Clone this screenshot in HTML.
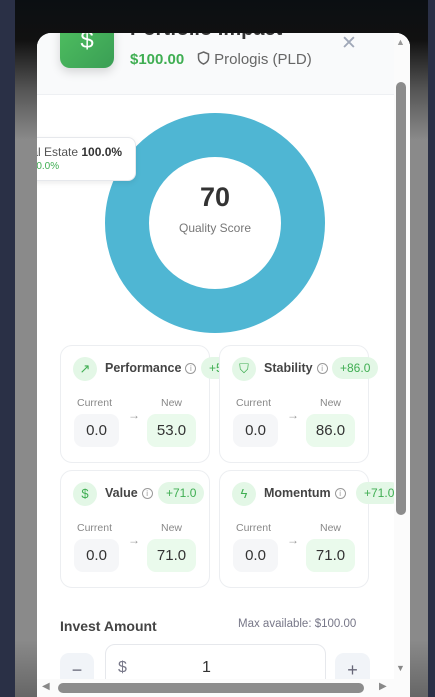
<!DOCTYPE html>
<html><head><style>
*{box-sizing:border-box;margin:0;padding:0}
body{width:435px;height:697px;overflow:hidden;background:#2a3046;font-family:"Liberation Sans",sans-serif;position:relative}
.bgg{position:absolute;left:15px;top:0;width:413px;height:697px;background:linear-gradient(#0b0f12 0,#111 40px,#555 90px,#8a8a8a 140px,#8a8a8a 640px,#666 697px)}
.modal{position:absolute;left:37px;top:33px;width:373px;height:664px;background:#fff;border-radius:14px 14px 0 0;overflow:hidden}
.hdr{position:absolute;left:0;top:0;width:373px;height:62px;background:#f9fafb;border-bottom:1px solid #eef0f3}
.icon{position:absolute;left:23px;top:-12px;width:54px;height:47px;border-radius:10px;background:linear-gradient(135deg,#4fc060,#3a9e55);color:#fff;font-size:24px;text-align:center;line-height:40px;box-shadow:0 4px 10px rgba(0,0,0,.15)}
.title{position:absolute;left:93px;top:-15px;font-size:20px;font-weight:bold;color:#333}
.amt{position:absolute;left:93px;top:18px;font-size:15px;color:#3fae52;font-weight:bold}
.pld{position:absolute;left:160px;top:18px;font-size:15px;color:#666}
.x{position:absolute;left:304px;top:-1px;font-size:19px;color:#a0a8b8}
.tip{position:absolute;left:-10px;top:104px;width:109px;height:44px;background:#fff;border:1px solid #e6e8ec;border-radius:8px;box-shadow:0 2px 6px rgba(0,0,0,.08);font-size:12px;color:#555;padding:7px 0 0 0}
.card{position:absolute;width:150px;height:118px;border:1px solid #eceef1;border-radius:12px;background:#fff}
.ci{position:absolute;left:12px;top:11px;width:24px;height:24px;border-radius:50%;background:#e3f7e6;color:#3fae52;font-size:13px;text-align:center;line-height:24px}
.cn{position:absolute;left:44px;top:15px;font-size:12.5px;font-weight:bold;color:#444;white-space:nowrap}
.info{display:inline-block;width:11px;height:11px;border:1px solid #999;border-radius:50%;font-size:8px;line-height:9px;text-align:center;color:#999;font-weight:normal;vertical-align:1px;margin-left:4px}
.badge{position:absolute;top:11px;height:22px;border-radius:11px;background:#e3f7e6;color:#3fae52;font-size:12px;line-height:22px;padding:0 8px;white-space:nowrap}
.lb{position:absolute;top:51px;font-size:10.5px;color:#888}
.bx{position:absolute;top:68px;height:33px;border-radius:9px;font-size:15px;color:#333;text-align:center;line-height:33px}
.cur{left:13px;width:45px;background:#f5f6f8}
.new{left:86px;width:49px;background:#eafaec}
.arr{position:absolute;left:67px;top:62px;color:#999;font-size:12px}
</style></head><body>
<div class="bgg"></div>
<div class="modal">
 <div class="hdr">
  <div class="icon">$</div>
  <div class="title">Portfolio Impact</div>
  <div class="amt">$100.00</div>
  <div class="pld"><svg width="13" height="14" viewBox="0 0 13 14" style="vertical-align:-1px"><path d="M6.5 1L11.5 3V7C11.5 10 9 12 6.5 13C4 12 1.5 10 1.5 7V3Z" fill="none" stroke="#666" stroke-width="1.5"/></svg> Prologis (PLD)</div>
  <div class="x">✕</div>
 </div>
 <svg style="position:absolute;left:67px;top:79px" width="222" height="222"><circle cx="111" cy="111" r="88" fill="none" stroke="#4fb6d3" stroke-width="44"/></svg>
 <div style="position:absolute;left:128px;top:149px;width:100px;text-align:center;font-size:27px;font-weight:bold;color:#333">70</div>
 <div style="position:absolute;left:128px;top:188px;width:100px;text-align:center;font-size:12px;color:#777">Quality Score</div>
 <div class="tip"><div>&nbsp;al Estate <b style="color:#333">100.0%</b></div><div style="color:#3fae52;font-size:10px;margin-top:2px">&nbsp;00.0%</div></div>

 <div class="card" style="left:23px;top:312px"><div class="ci">↗</div><div class="cn">Performance<span class="info">i</span></div><div class="badge" style="left:140px">+53.0</div><div class="lb" style="left:16px">Current</div><div class="lb" style="left:100px">New</div><div class="bx cur">0.0</div><div class="arr">→</div><div class="bx new">53.0</div></div>
 <div class="card" style="left:182px;top:312px"><div class="ci">⛉</div><div class="cn">Stability<span class="info">i</span></div><div class="badge" style="left:112px">+86.0</div><div class="lb" style="left:16px">Current</div><div class="lb" style="left:100px">New</div><div class="bx cur">0.0</div><div class="arr">→</div><div class="bx new">86.0</div></div>
 <div class="card" style="left:23px;top:437px"><div class="ci">$</div><div class="cn">Value<span class="info">i</span></div><div class="badge" style="left:97px">+71.0</div><div class="lb" style="left:16px">Current</div><div class="lb" style="left:100px">New</div><div class="bx cur">0.0</div><div class="arr">→</div><div class="bx new">71.0</div></div>
 <div class="card" style="left:182px;top:437px"><div class="ci">ϟ</div><div class="cn">Momentum<span class="info">i</span></div><div class="badge" style="left:136px">+71.0</div><div class="lb" style="left:16px">Current</div><div class="lb" style="left:100px">New</div><div class="bx cur">0.0</div><div class="arr">→</div><div class="bx new">71.0</div></div>

 <div style="position:absolute;left:23px;top:585px;font-size:14px;font-weight:bold;color:#444">Invest Amount</div>
 <div style="position:absolute;left:201px;top:585px;font-size:11.5px;color:#778">Max available: $100.00</div>
 <div style="position:absolute;left:23px;top:620px;width:34px;height:40px;border-radius:9px;background:#f1f4f8;text-align:center;line-height:34px;color:#667;font-size:18px">−</div>
 <div style="position:absolute;left:68px;top:611px;width:221px;height:60px;border-radius:10px;border:1px solid #e6e8ec"><span style="position:absolute;left:12px;top:14px;font-size:16px;color:#778">$</span><span style="position:absolute;left:96px;top:14px;font-size:16px;color:#333">1</span></div>
 <div style="position:absolute;left:298px;top:620px;width:35px;height:40px;border-radius:9px;background:#f1f4f8;text-align:center;line-height:34px;color:#667;font-size:18px">+</div>

 <div style="position:absolute;left:357px;top:0;width:16px;height:664px;background:#fbfbfb"></div>
 <div style="position:absolute;left:359px;top:49px;width:10px;height:433px;border-radius:5px;background:#8c8c8c"></div>
 <div style="position:absolute;left:359px;top:4px;color:#999;font-size:9px">▲</div>
 <div style="position:absolute;left:359px;top:630px;color:#888;font-size:9px">▼</div>
 <div style="position:absolute;left:0;top:646px;width:373px;height:18px;background:#fbfbfb"></div>
 <div style="position:absolute;left:21px;top:650px;width:306px;height:10px;border-radius:5px;background:#8c8c8c"></div>
 <div style="position:absolute;left:5px;top:648px;color:#888;font-size:10px">◀</div>
 <div style="position:absolute;left:342px;top:648px;color:#888;font-size:10px">▶</div>
</div>
</body></html>
